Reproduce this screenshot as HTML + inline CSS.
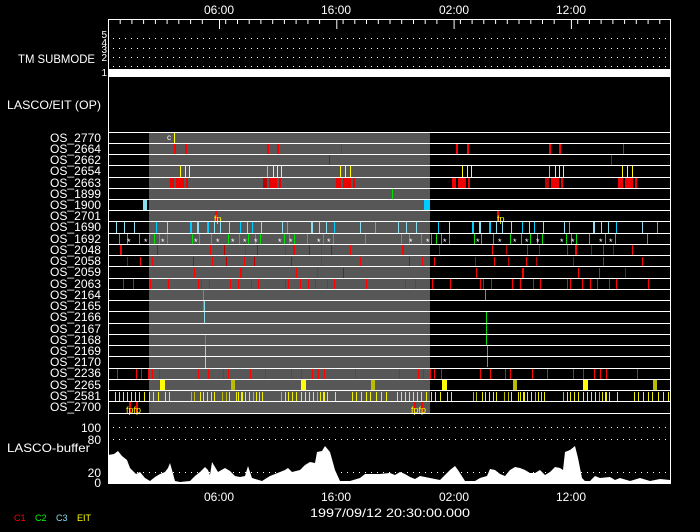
<!DOCTYPE html>
<html><head><meta charset="utf-8"><style>
html,body{margin:0;padding:0;background:#000;}
svg{display:block}
text{font-family:"Liberation Sans",sans-serif;fill:#fff}
</style></head><body>
<svg width="700" height="532" viewBox="0 0 700 532" xmlns="http://www.w3.org/2000/svg">
<defs>
<clipPath id="pc"><rect x="108" y="132" width="563" height="281"/></clipPath>
<g id="d">
 <!-- row1 2664 -->
 <g fill="#f00"><rect x="174" y="144" width="2" height="10"/><rect x="185" y="144" width="2" height="10"/><rect x="267" y="144" width="2" height="10"/><rect x="277" y="144" width="2" height="10"/><rect x="341" y="144" width="1" height="10"/></g>
 <rect x="329" y="155" width="1" height="10" fill="#c00"/>
 <!-- row3 2654 -->
 <g fill="#ff0"><rect x="180" y="166" width="1" height="11"/><rect x="185" y="166" width="1" height="11"/><rect x="189" y="166" width="1" height="11"/><rect x="267" y="166" width="1" height="11" fill="#cc0"/><rect x="273" y="166" width="1" height="11"/><rect x="277" y="166" width="1" height="11"/><rect x="281" y="166" width="1" height="11"/><rect x="340" y="166" width="1" height="11"/><rect x="345" y="166" width="1" height="11"/><rect x="350" y="166" width="1" height="11"/></g>
 <!-- row4 2663 -->
 <g fill="#e00"><rect x="170" y="178" width="4" height="10"/><rect x="176" y="178" width="8" height="10"/><rect x="186" y="178" width="2" height="10"/><rect x="263" y="178" width="4" height="10" fill="#b00"/><rect x="269" y="178" width="8" height="10"/><rect x="279" y="178" width="2" height="10"/><rect x="336" y="178" width="5" height="10"/><rect x="343" y="178" width="8" height="10"/><rect x="353" y="178" width="2" height="10"/></g>
 <!-- row6 1900 -->
 <rect x="143" y="200" width="4" height="11" fill="#8de"/>
 <!-- row7 2701 -->
 <rect x="215" y="211" width="2" height="11" fill="#f00"/>
 <!-- row8 1690 -->
 <g fill="#8de"><rect x="116" y="222" width="1" height="11"/><rect x="124" y="222" width="1" height="11"/><rect x="134" y="222" width="1" height="11"/><rect x="156" y="222" width="1" height="11" fill="#0cf"/><rect x="167" y="222" width="1" height="11"/><rect x="190" y="222" width="2" height="11" fill="#0cf"/><rect x="197" y="222" width="2" height="11"/><rect x="207" y="222" width="2" height="11" fill="#0cf"/><rect x="214" y="222" width="1" height="11"/><rect x="220" y="222" width="1" height="11"/><rect x="229" y="222" width="1" height="11"/><rect x="240" y="222" width="1" height="11" fill="#0cf"/><rect x="247" y="222" width="1" height="11"/><rect x="252" y="222" width="1" height="11" fill="#0cf"/><rect x="261" y="222" width="1" height="11"/><rect x="282" y="222" width="1" height="11"/><rect x="287" y="222" width="1" height="11" fill="#0cf"/><rect x="311" y="222" width="2" height="11"/><rect x="319" y="222" width="1" height="11"/><rect x="326" y="222" width="1" height="11"/><rect x="334" y="222" width="1" height="11" fill="#0cf"/><rect x="360" y="222" width="1" height="11"/><rect x="375" y="222" width="1" height="11" fill="#0cf"/></g>
 <!-- row9 1692 -->
 <g fill="#0d0"><rect x="119" y="234" width="1" height="10"/><rect x="127" y="234" width="1" height="10"/><rect x="139" y="234" width="1" height="10"/><rect x="149" y="234" width="1" height="10"/><rect x="154" y="234" width="1" height="10"/><rect x="159" y="234" width="1" height="10"/><rect x="167" y="234" width="1" height="10"/><rect x="192" y="234" width="1" height="10"/><rect x="199" y="234" width="1" height="10"/><rect x="211" y="234" width="1" height="10"/><rect x="228" y="234" width="1" height="10"/><rect x="239" y="234" width="1" height="10"/><rect x="248" y="234" width="1" height="10"/><rect x="255" y="234" width="1" height="10"/><rect x="260" y="234" width="1" height="10"/><rect x="284" y="234" width="1" height="10"/><rect x="289" y="234" width="1" height="10"/><rect x="294" y="234" width="1" height="10"/><rect x="307" y="234" width="1" height="10"/><rect x="323" y="234" width="1" height="10"/><rect x="333" y="234" width="1" height="10"/><rect x="365" y="234" width="1" height="10"/></g>
 <g font-size="9" fill="#fff"><text x="127" y="245">*</text><text x="144" y="245">*</text><text x="161" y="245">*</text><text x="194" y="245">*</text><text x="216" y="245">*</text><text x="231" y="245">*</text><text x="243" y="245">*</text><text x="254" y="245">*</text><text x="278" y="245">*</text><text x="289" y="245">*</text><text x="317" y="245">*</text><text x="327" y="245">*</text></g>
 <!-- rows 10-13 red -->
 <g fill="#f00"><rect x="120" y="245" width="2" height="11"/><rect x="157" y="245" width="1" height="11" fill="#b00"/><rect x="210" y="245" width="1" height="11"/><rect x="224" y="245" width="1" height="11" fill="#b00"/><rect x="245" y="245" width="1" height="11"/><rect x="257" y="245" width="1" height="11" fill="#b00"/><rect x="285" y="245" width="1" height="11"/><rect x="293" y="245" width="2" height="11"/><rect x="309" y="245" width="1" height="11" fill="#b00"/><rect x="321" y="245" width="1" height="11"/><rect x="331" y="245" width="1" height="11" fill="#b00"/><rect x="350" y="245" width="1" height="11"/>
 <rect x="127" y="257" width="1" height="10" fill="#b00"/><rect x="140" y="257" width="1" height="10"/><rect x="152" y="257" width="1" height="10"/><rect x="193" y="257" width="1" height="10" fill="#b00"/><rect x="212" y="257" width="1" height="10"/><rect x="226" y="257" width="1" height="10" fill="#b00"/><rect x="244" y="257" width="1" height="10"/><rect x="254" y="257" width="1" height="10" fill="#b00"/><rect x="291" y="257" width="1" height="10" fill="#b00"/><rect x="321" y="257" width="1" height="10"/><rect x="360" y="257" width="1" height="10"/>
 <rect x="194" y="268" width="1" height="10"/><rect x="240" y="268" width="2" height="10"/><rect x="296" y="268" width="1" height="10"/><rect x="317" y="268" width="1" height="10"/><rect x="343" y="268" width="1" height="10" fill="#b00"/>
 <rect x="123" y="279" width="1" height="10"/><rect x="133" y="279" width="1" height="10"/><rect x="150" y="279" width="1" height="10"/><rect x="168" y="279" width="1" height="10"/><rect x="198" y="279" width="1" height="10"/><rect x="201" y="279" width="1" height="10"/><rect x="209" y="279" width="1" height="10"/><rect x="230" y="279" width="1" height="10"/><rect x="238" y="279" width="1" height="10"/><rect x="251" y="279" width="1" height="10"/><rect x="258" y="279" width="1" height="10"/><rect x="285" y="279" width="1" height="10"/><rect x="288" y="279" width="1" height="10"/><rect x="300" y="279" width="1" height="10"/><rect x="308" y="279" width="1" height="10"/><rect x="315" y="279" width="1" height="10"/><rect x="327" y="279" width="1" height="10"/><rect x="334" y="279" width="1" height="10"/><rect x="366" y="279" width="1" height="10"/>
 <!-- row21 2236 -->
 <rect x="117" y="369" width="1" height="10"/><rect x="136" y="369" width="1" height="10"/><rect x="141" y="369" width="1" height="10"/><rect x="148" y="369" width="1" height="10"/><rect x="152" y="369" width="1" height="10"/><rect x="159" y="369" width="1" height="10"/><rect x="198" y="369" width="1" height="10"/><rect x="208" y="369" width="1" height="10"/><rect x="223" y="369" width="1" height="10"/><rect x="228" y="369" width="1" height="10"/><rect x="250" y="369" width="1" height="10"/><rect x="265" y="369" width="1" height="10"/><rect x="291" y="369" width="1" height="10"/><rect x="301" y="369" width="1" height="10"/><rect x="312" y="369" width="1" height="10"/><rect x="318" y="369" width="1" height="10"/><rect x="324" y="369" width="1" height="10"/><rect x="355" y="369" width="1" height="10"/>
 </g>
 <!-- row22 2265 -->
 <g fill="#ff0"><rect x="160" y="380" width="5" height="11"/><rect x="231" y="380" width="4" height="11" fill="#bb0"/><rect x="301" y="380" width="5" height="11"/><rect x="371" y="380" width="4" height="11" fill="#bb0"/></g>
 <!-- row23 2581 -->
 <g fill="#ee0"><rect x="115" y="392" width="1" height="9"/><rect x="119" y="392" width="1" height="9"/><rect x="123" y="392" width="1" height="9"/><rect x="127" y="392" width="1" height="9"/><rect x="131" y="392" width="1" height="9"/><rect x="135" y="392" width="1" height="9"/><rect x="139" y="392" width="1" height="9"/><rect x="144" y="392" width="1" height="9"/><rect x="149" y="392" width="1" height="9"/><rect x="153" y="392" width="1" height="9"/><rect x="158" y="392" width="1" height="9"/><rect x="165" y="392" width="1" height="9"/><rect x="169" y="392" width="1" height="9"/><rect x="191" y="392" width="1" height="9" fill="#bb0"/><rect x="194" y="392" width="1" height="9" fill="#bb0"/><rect x="200" y="392" width="1" height="9"/><rect x="203" y="392" width="1" height="9"/><rect x="207" y="392" width="1" height="9"/><rect x="211" y="392" width="1" height="9"/><rect x="214" y="392" width="1" height="9"/><rect x="222" y="392" width="1" height="9" fill="#bb0"/><rect x="226" y="392" width="1" height="9" fill="#bb0"/><rect x="229" y="392" width="1" height="9"/><rect x="236" y="392" width="1" height="9"/><rect x="238" y="392" width="1" height="9"/><rect x="241" y="392" width="2" height="9"/><rect x="245" y="392" width="1" height="9"/><rect x="249" y="392" width="1" height="9"/><rect x="253" y="392" width="1" height="9" fill="#bb0"/><rect x="256" y="392" width="1" height="9"/><rect x="259" y="392" width="1" height="9"/><rect x="262" y="392" width="1" height="9"/><rect x="281" y="392" width="1" height="9" fill="#bb0"/><rect x="285" y="392" width="1" height="9"/><rect x="288" y="392" width="1" height="9"/><rect x="292" y="392" width="1" height="9"/><rect x="296" y="392" width="1" height="9"/><rect x="301" y="392" width="1" height="9"/><rect x="305" y="392" width="1" height="9"/><rect x="309" y="392" width="1" height="9"/><rect x="313" y="392" width="1" height="9"/><rect x="317" y="392" width="1" height="9" fill="#bb0"/><rect x="320" y="392" width="1" height="9"/><rect x="323" y="392" width="2" height="9"/><rect x="327" y="392" width="1" height="9"/><rect x="335" y="392" width="1" height="9"/><rect x="352" y="392" width="1" height="9"/><rect x="356" y="392" width="1" height="9"/><rect x="361" y="392" width="1" height="9"/><rect x="366" y="392" width="1" height="9"/><rect x="370" y="392" width="1" height="9"/><rect x="376" y="392" width="1" height="9"/><rect x="381" y="392" width="1" height="9"/><rect x="386" y="392" width="1" height="9"/></g>
</g>
</defs>

<!-- top axis -->
<g font-size="12"><text x="219" y="14" text-anchor="middle">06:00</text><text x="336" y="14" text-anchor="middle">16:00</text><text x="454" y="14" text-anchor="middle">02:00</text><text x="571" y="14" text-anchor="middle">12:00</text></g>
<rect x="108" y="19" width="563" height="1" fill="#fff"/>
<g stroke="#fff" stroke-width="1">
<path d="M120.2 19v5M131.9 19v5M143.6 19v5M155.4 19v5M167.1 19v5M178.8 19v5M190.6 19v5M202.3 19v5M219.5 19v10M225.7 19v5M237.5 19v5M249.2 19v5M260.9 19v5M272.7 19v5M284.4 19v5M296.1 19v5M307.9 19v5M319.6 19v5M336.8 19v10M343.1 19v5M354.8 19v5M366.5 19v5M378.3 19v5M390 19v5M401.7 19v5M413.5 19v5M425.2 19v5M436.9 19v5M454.1 19v10M460.4 19v5M472.1 19v5M483.8 19v5M495.6 19v5M507.3 19v5M519 19v5M530.8 19v5M542.5 19v5M554.2 19v5M571.4 19v10M577.7 19v5M589.4 19v5M601.1 19v5M612.9 19v5M624.6 19v5M636.3 19v5M648.1 19v5M659.8 19v5"/>
</g>
<g stroke="#fff" stroke-dasharray="1 5" stroke-width="1"><path d="M113 38.5H670M113 48.5H670M113 57.5H670M113 66.5H670"/></g>
<rect x="108" y="69" width="563" height="8" fill="#fff"/>
<g font-size="10" text-anchor="end"><text x="107" y="38">5</text><text x="107" y="46">4</text><text x="107" y="53">3</text><text x="107" y="61">2</text><text x="107" y="76">1</text></g>
<text x="18" y="63" font-size="12" textLength="77" lengthAdjust="spacingAndGlyphs">TM SUBMODE</text>
<text x="7" y="109" font-size="12" textLength="94" lengthAdjust="spacingAndGlyphs">LASCO/EIT (OP)</text>
<rect x="108" y="19" width="1" height="464" fill="#fff"/>
<rect x="670" y="19" width="1" height="464" fill="#fff"/>

<!-- gray region -->
<rect x="149" y="132" width="281" height="281" fill="#575757"/>
<g clip-path="url(#pc)"><use href="#d"/><use href="#d" x="282"/></g>
<rect x="174" y="133" width="1" height="10" fill="#ff0"/>
<rect x="203" y="289" width="1" height="23" fill="#0d0"/><rect x="204" y="300" width="1" height="23" fill="#8de"/><rect x="205" y="334" width="1" height="12" fill="#0d0"/><rect x="205" y="345" width="1" height="23" fill="#8de"/>
<rect x="485" y="289" width="1" height="12" fill="#888"/><rect x="486" y="311" width="1" height="35" fill="#0d0"/><rect x="487" y="345" width="1" height="22" fill="#888"/>
<rect x="392" y="189" width="1" height="10" fill="#0d0"/>
<rect x="424" y="200" width="6" height="11" fill="#0cf"/>
<rect x="129" y="402" width="2" height="11" fill="#f00"/><rect x="136" y="402" width="2" height="11" fill="#f00"/>
<rect x="414" y="402" width="2" height="11" fill="#f00"/><rect x="421" y="402" width="2" height="11" fill="#f00"/>
<g font-size="9" style="fill:#ff0"><text x="126" y="413" style="fill:#ff0">fpfp</text><text x="411" y="413" style="fill:#ff0">fpfp</text><text x="214" y="222" style="fill:#ff0">fp</text><text x="497" y="222" style="fill:#ff0">fp</text></g>
<text x="167" y="140" font-size="8" fill="#fff">c</text>

<!-- row lines -->
<g fill="#fff">
<rect x="108" y="132" width="563" height="1"/><rect x="108" y="143" width="563" height="1"/><rect x="108" y="154" width="563" height="1"/><rect x="108" y="165" width="563" height="1"/><rect x="108" y="177" width="563" height="1"/><rect x="108" y="188" width="563" height="1"/><rect x="108" y="199" width="563" height="1"/><rect x="108" y="210" width="563" height="1"/><rect x="108" y="221" width="563" height="1"/><rect x="108" y="233" width="563" height="1"/><rect x="108" y="244" width="563" height="1"/><rect x="108" y="255" width="563" height="1"/><rect x="108" y="266" width="563" height="1"/><rect x="108" y="278" width="563" height="1"/><rect x="108" y="289" width="563" height="1"/><rect x="108" y="300" width="563" height="1"/><rect x="108" y="311" width="563" height="1"/><rect x="108" y="323" width="563" height="1"/><rect x="108" y="334" width="563" height="1"/><rect x="108" y="345" width="563" height="1"/><rect x="108" y="356" width="563" height="1"/><rect x="108" y="368" width="563" height="1"/><rect x="108" y="379" width="563" height="1"/><rect x="108" y="390" width="563" height="1"/><rect x="108" y="401" width="563" height="1"/><rect x="108" y="413" width="563" height="1"/>
</g>
<g font-size="12">
<text x="50" y="142" textLength="51" lengthAdjust="spacingAndGlyphs">OS_2770</text><text x="50" y="153" textLength="51" lengthAdjust="spacingAndGlyphs">OS_2664</text><text x="50" y="164" textLength="51" lengthAdjust="spacingAndGlyphs">OS_2662</text><text x="50" y="175" textLength="51" lengthAdjust="spacingAndGlyphs">OS_2654</text><text x="50" y="187" textLength="51" lengthAdjust="spacingAndGlyphs">OS_2663</text><text x="50" y="198" textLength="51" lengthAdjust="spacingAndGlyphs">OS_1899</text><text x="50" y="209" textLength="51" lengthAdjust="spacingAndGlyphs">OS_1900</text><text x="50" y="220" textLength="51" lengthAdjust="spacingAndGlyphs">OS_2701</text><text x="50" y="231" textLength="51" lengthAdjust="spacingAndGlyphs">OS_1690</text><text x="50" y="243" textLength="51" lengthAdjust="spacingAndGlyphs">OS_1692</text><text x="50" y="254" textLength="51" lengthAdjust="spacingAndGlyphs">OS_2048</text><text x="50" y="265" textLength="51" lengthAdjust="spacingAndGlyphs">OS_2058</text><text x="50" y="276" textLength="51" lengthAdjust="spacingAndGlyphs">OS_2059</text><text x="50" y="288" textLength="51" lengthAdjust="spacingAndGlyphs">OS_2063</text><text x="50" y="299" textLength="51" lengthAdjust="spacingAndGlyphs">OS_2164</text><text x="50" y="310" textLength="51" lengthAdjust="spacingAndGlyphs">OS_2165</text><text x="50" y="321" textLength="51" lengthAdjust="spacingAndGlyphs">OS_2166</text><text x="50" y="333" textLength="51" lengthAdjust="spacingAndGlyphs">OS_2167</text><text x="50" y="344" textLength="51" lengthAdjust="spacingAndGlyphs">OS_2168</text><text x="50" y="355" textLength="51" lengthAdjust="spacingAndGlyphs">OS_2169</text><text x="50" y="366" textLength="51" lengthAdjust="spacingAndGlyphs">OS_2170</text><text x="50" y="377" textLength="51" lengthAdjust="spacingAndGlyphs">OS_2236</text><text x="50" y="389" textLength="51" lengthAdjust="spacingAndGlyphs">OS_2265</text><text x="50" y="400" textLength="51" lengthAdjust="spacingAndGlyphs">OS_2581</text><text x="50" y="411" textLength="51" lengthAdjust="spacingAndGlyphs">OS_2700</text>
</g>

<!-- buffer -->
<g stroke="#fff" stroke-dasharray="1 5"><path d="M113 427.5H670M113 439.5H670M113 472.5H670"/></g>
<polygon fill="#fff" points="108,483 108,455 114,454 118,451 122,456 127,460 130,468 136,474 140,472 145,478 150,481 155,477 160,474 165,472 168,468 170,463 172,470 175,481 180,482 190,481 195,476 200,472 205,467 208,470 210,475 212,462 218,472 225,468 230,471 235,476 240,477 245,476 248,466 252,478 262,481 270,476 275,474 280,472 285,470 288,468 292,472 300,470 305,465 310,462 315,463 317,452 322,451 325,446 330,452 335,470 340,481 350,481 360,478 365,474 370,474 380,474 390,473 395,475 400,472 405,474 410,477 415,479 420,476 430,478 440,480 445,475 450,470 455,466 458,470 465,481 475,481 480,478 487,476 490,469 495,470 500,474 505,476 510,470 515,467 520,468 525,470 530,473 535,473 540,470 545,475 550,472 555,467 560,468 563,470 565,452 570,450 575,446 578,458 582,478 585,481 590,481 595,476 600,478 610,477 615,480 620,478 630,481 640,478 650,481 660,479 670,480 670,483"/>
<rect x="108" y="483" width="563" height="1" fill="#fff"/>
<g font-size="12" text-anchor="end"><text x="101" y="432">100</text><text x="101" y="444">80</text><text x="101" y="477">20</text><text x="101" y="487">0</text></g>
<text x="7" y="452" font-size="12" textLength="83" lengthAdjust="spacingAndGlyphs">LASCO-buffer</text>

<!-- bottom axis -->
<g font-size="12" text-anchor="middle"><text x="219" y="501">06:00</text><text x="336" y="501">16:00</text><text x="454" y="501">02:00</text><text x="571" y="501">12:00</text></g>
<text x="310" y="517" font-size="12" textLength="160" lengthAdjust="spacingAndGlyphs">1997/09/12 20:30:00.000</text>
<g font-size="9"><text x="14" y="521" style="fill:#f00">C1</text><text x="35" y="521" style="fill:#0f0">C2</text><text x="56" y="521" style="fill:#8de">C3</text><text x="77" y="521" style="fill:#ff0">EIT</text></g>
</svg>
</body></html>
